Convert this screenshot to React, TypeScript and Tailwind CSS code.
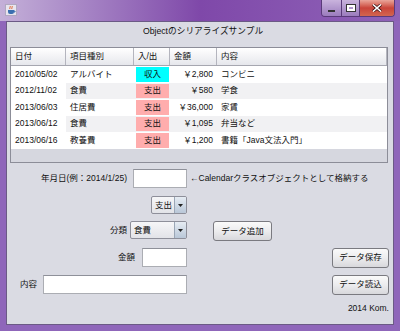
import React from 'react';

type Row = { date: string; kind: string; io: '収入' | '支出'; amount: string; memo: string };

const rows: Row[] = [
  { date: '2010/05/02', kind: 'アルバイト', io: '収入', amount: '￥2,800', memo: 'コンビニ' },
  { date: '2012/11/02', kind: '食費', io: '支出', amount: '￥580', memo: '学食' },
  { date: '2013/06/03', kind: '住居費', io: '支出', amount: '￥36,000', memo: '家賃' },
  { date: '2013/06/12', kind: '食費', io: '支出', amount: '￥1,095', memo: '弁当など' },
  { date: '2013/06/16', kind: '教養費', io: '支出', amount: '￥1,200', memo: '書籍「Java文法入門」' },
];

const headers = ['日付', '項目種別', '入/出', '金額', '内容'];
const widths = ['w-[55px]', 'w-[68px]', 'w-[36px]', 'w-[47px]', 'w-[170px]'];

function JavaIcon() {
  return (
    <svg width="12" height="12" viewBox="0 0 12 12">
      <rect x="0.5" y="0.5" width="11" height="11" fill="#e8e4ee" stroke="#b0a8c0" />
      <path d="M5 2c1 1-1 2 0 3M7 2c1 1-1 2 0 3" stroke="#e0602a" strokeWidth="1" fill="none" />
      <path d="M3 6h6v2a2 2 0 0 1-2 2H5a2 2 0 0 1-2-2z" fill="#3a6fb0" />
      <path d="M9 7h1v1H9" stroke="#3a6fb0" fill="none" />
    </svg>
  );
}

function TextField({ w }: { w: string }) {
  return <div className={`${w} h-[19px] bg-white border border-[#abadb3] border-t-[#8e9099]`} />;
}

function Combo({ w, label }: { w: string; label: string }) {
  return (
    <div className={`${w} h-[18px] flex border border-[#8e8f9a] rounded-[2px] bg-gradient-to-b from-[#f6f6f8] to-[#e2e3e8] overflow-hidden`}>
      <div className="flex-1 flex items-center pl-[3px]">{label}</div>
      <div className="w-[12px] flex items-center justify-center border-l border-[#9aa6b6] bg-gradient-to-b from-[#e6ecf3] to-[#b9c7d8]">
        <svg width="5" height="3" viewBox="0 0 5 3">
          <path d="M0 0h5L2.5 3z" fill="#222" />
        </svg>
      </div>
    </div>
  );
}

function Button({ label, w }: { label: string; w: string }) {
  return (
    <div className={`${w} h-[20px] flex items-center justify-center rounded-[3px] border border-[#7a7a80] bg-gradient-to-b from-[#fafafa] via-[#ececee] to-[#d8d8dc] text-[#111]`}>
      {label}
    </div>
  );
}

export default function App() {
  return (
    <div className="w-[400px] h-[331px] flex flex-col bg-[#8f66ba] font-['Liberation_Sans','Noto_Sans_CJK_JP',sans-serif] text-[8.5px] text-[#111] overflow-hidden">
      {/* Title bar */}
      <div className="h-[21px] flex items-start bg-gradient-to-r from-[#c4b0d8] via-[#7f48a9] to-[#8f63b8]">
        <div className="pl-[5px] pt-[4px]">
          <JavaIcon />
        </div>
        <div className="flex-1" />
        <div className="flex mr-[5px] h-[17px] rounded-b-[4px] overflow-hidden border border-t-0 border-[#5a3a7a]">
          <div className="w-[20px] flex items-end justify-center pb-[4px] bg-gradient-to-b from-[#c9b3dd] to-[#9b7cbd] border-r border-[#5a3a7a]">
            <div className="w-[7px] h-[2px] bg-white border border-[#333]" />
          </div>
          <div className="w-[18px] flex items-center justify-center bg-gradient-to-b from-[#c9b3dd] to-[#9b7cbd] border-r border-[#5a3a7a]">
            <div className="w-[8px] h-[6px] border-2 border-white outline outline-1 outline-[#333]" />
          </div>
          <div className="w-[34px] flex items-center justify-center bg-gradient-to-b from-[#e9a59a] via-[#c9443a] to-[#d2654f] text-white font-bold text-[10px]">
            <svg width="10" height="8" viewBox="0 0 10 8">
              <path d="M1 0.5L9 7.5M9 0.5L1 7.5" stroke="#3a1010" strokeWidth="3" />
              <path d="M1 0.5L9 7.5M9 0.5L1 7.5" stroke="#fff" strokeWidth="1.6" />
            </svg>
          </div>
        </div>
      </div>

      <div className="flex-1 flex px-[6px] pb-[6px]">
        <div className="flex-1 flex flex-col border border-[#6b5a85] bg-[#dadbe3]">
          {/* Heading */}
          <div className="h-[19px] flex items-center justify-center pl-[6px] pt-[1px] text-[8.7px]">
            Objectのシリアライズサンプル
          </div>

          {/* Table */}
          <div className="mt-[6px] ml-[3px] w-[378px] h-[116px] border border-[#8c8d98] bg-[#d6d7df] flex flex-col">
            <div className="h-[18px] flex bg-gradient-to-b from-[#ffffff] to-[#e6e7ec] border-b border-[#a6a7b0]">
              {headers.map((h, i) => (
                <div key={h} className={`${widths[i]} flex items-center pl-[4px] border-r border-[#b4b5be]`}>
                  {h}
                </div>
              ))}
            </div>
            {rows.map((r, i) => (
              <div key={r.date + i} className={`h-[16.5px] flex ${i % 2 === 1 ? 'bg-[#f1f1f3]' : 'bg-white'}`}>
                <div className="w-[55px] flex items-center pl-[4px] bg-white">{r.date}</div>
                <div className="w-[68px] flex items-center pl-[4px]">{r.kind}</div>
                <div className="w-[36px] flex p-[1px] pl-[2px]">
                  <div className={`flex-1 flex items-center justify-center ${r.io === '収入' ? 'bg-[#00ffff]' : 'bg-[#ffadad]'}`}>
                    {r.io}
                  </div>
                </div>
                <div className="w-[47px] flex items-center justify-end pr-[4px]">{r.amount}</div>
                <div className="w-[170px] flex items-center pl-[4px]">{r.memo}</div>
              </div>
            ))}
          </div>

          {/* Date row */}
          <div className="mt-[6px] h-[19px] flex items-center">
            <div className="w-[120px] text-right">年月日(例：2014/1/25)</div>
            <div className="ml-[6px]">
              <TextField w="w-[54px]" />
            </div>
            <div className="ml-[3px]">←Calendarクラスオブジェクトとして格納する</div>
          </div>

          {/* In/Out */}
          <div className="mt-[8px] flex pl-[144px]">
            <Combo w="w-[36px]" label="支出" />
          </div>

          {/* Category */}
          <div className="mt-[7px] h-[20px] flex items-start">
            <div className="w-[120px] h-[18px] flex items-center justify-end">分類</div>
            <div className="ml-[3px]">
              <Combo w="w-[57px]" label="食費" />
            </div>
            <div className="ml-[26px]">
              <Button label="データ追加" w="w-[59px]" />
            </div>
          </div>

          {/* Amount */}
          <div className="mt-[7px] h-[19px] flex items-center pr-[4px]">
            <div className="w-[128px] text-right">金額</div>
            <div className="ml-[7px]">
              <TextField w="w-[45px]" />
            </div>
            <div className="flex-1" />
            <Button label="データ保存" w="w-[57px]" />
          </div>

          {/* Memo */}
          <div className="mt-[8px] h-[19px] flex items-center pr-[4px]">
            <div className="pl-[13px] w-[36px]">内容</div>
            <TextField w="w-[144px]" />
            <div className="flex-1" />
            <Button label="データ読込" w="w-[57px]" />
          </div>

          {/* Footer */}
          <div className="mt-[8px] flex justify-end pr-[4px]">2014 Kom.</div>
        </div>
      </div>
    </div>
  );
}
